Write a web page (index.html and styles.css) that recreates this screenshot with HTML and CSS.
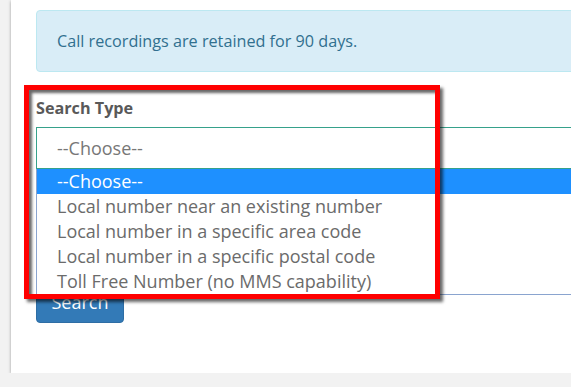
FILE: index.html
```html
<!DOCTYPE html>
<html lang="en">
<head>
  <meta charset="UTF-8" />
  <title>Buy Number</title>
  <link rel="stylesheet" href="styles.css">
</head>
<body>
  <div class="panel">
    <div class="alert">Call recordings are retained for 90 days.</div>

    <div class="form-group">
      <label class="label">Search Type</label>
      <div class="select">
        --Choose--
        <ul class="options">
          <li class="option selected">--Choose--</li>
          <li class="option">Local number near an existing number</li>
          <li class="option">Local number in a specific area code</li>
          <li class="option">Local number in a specific postal code</li>
          <li class="option">Toll Free Number (no MMS capability)</li>
        </ul>
      </div>
    </div>

    <button class="btn">Search</button>

    <!-- annotation frame -->
    <div class="highlight"></div>
  </div>
</body>
</html>
```

FILE: styles.css
```css
body {
  margin: 0;
  background: #f2f2f2;
  font-family: "Open Sans", "Liberation Sans", sans-serif;
  overflow: hidden;
}

.panel {
  position: relative;
  margin-left: 11px;
  width: 700px;
  padding: 10px 0 50px 25px;
  background: #fff;
  box-shadow: 0 1px 3px rgba(0,0,0,0.35);
}

.alert {
  width: 620px;
  padding: 19px 20px;
  font-size: 16.2px;
  line-height: 22px;
  color: #31708f;
  background: #d9edf7;
  border: 1px solid #bce8f1;
  border-radius: 4px;
}

.form-group {
  margin-top: 26px;
}

.label {
  display: block;
  font-size: 16.2px;
  font-weight: bold;
  line-height: 20px;
  color: #595959;
  margin-bottom: 9px;
}

.select {
  position: relative;
  height: 40px;
  padding-left: 20px;
  border: 1px solid #36a18b;
  font-size: 18px;
  line-height: 40px;
  color: #777;
}

.options {
  position: absolute;
  top: 41px;
  left: -1px;
  right: -1px;
  margin: 0;
  padding: 0;
  list-style: none;
  background: #fff;
  border: 1px solid #8aa4cf;
  border-top: none;
  z-index: 2;
}

.option {
  height: 25px;
  padding-left: 20px;
  font-size: 18px;
  line-height: 25px;
  color: #6b6b6b;
}

.option.selected {
  background: #1e90ff;
  color: #fff;
}

.btn {
  display: block;
  margin-top: 120px;
  width: 88px;
  height: 34px;
  padding: 0 0 9px;
  font-family: inherit;
  font-size: 18px;
  line-height: 24px;
  color: #fff;
  background: #337ab7;
  border: 1px solid #2e6da4;
  border-radius: 4px;
}

.highlight {
  position: absolute;
  left: 13px;
  top: 85px;
  width: 406px;
  height: 204px;
  border: 5px solid #ff0000;
  box-shadow: 3px 3px 3px rgba(0,0,0,0.6), inset 3px 3px 3px rgba(0,0,0,0.6);
  z-index: 3;
}
```
